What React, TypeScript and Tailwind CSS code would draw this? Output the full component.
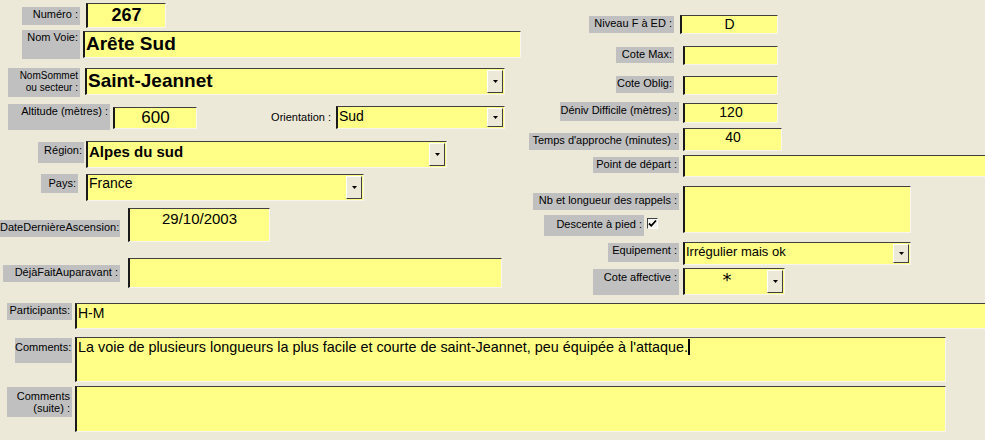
import type { ReactNode } from "react";

const Label = ({ className, children }: { className: string; children: ReactNode }) => (
    <div className={`bg-[#c0c0c0] text-right text-[11px] leading-[13px] pr-[2px] pt-[1px] text-black shrink-0 ${className}`}>
        {children}
    </div>
);

const Arrow = () => (
    <svg width="5" height="3" viewBox="0 0 5 3">
        <path d="M0 0h5L2.5 3z" fill="#000" />
    </svg>
);

const Field = ({
    className,
    text = "",
    children,
    dropdown,
}: {
    className: string;
    text?: string;
    children?: ReactNode;
    dropdown?: boolean;
}) => (
    <div
        className={`flex shrink-0 bg-[#ffff88] border-t border-l-2 border-r border-b border-t-[#404040] border-l-[#1a1a1a] border-r-[#f6f5ee] border-b-[#f6f5ee] overflow-hidden ${className}`}
    >
        <div className={`flex-1 min-w-0 whitespace-nowrap ${text}`}>{children}</div>
        {dropdown && (
            <div className="w-[16px] shrink-0 self-stretch my-[1px] mr-[1px] bg-[#ece9d8] border border-t-white border-l-white border-r-[#404040] border-b-[#404040] flex items-center justify-center">
                <Arrow />
            </div>
        )}
    </div>
);

export default function App() {
    return (
        <div className="w-[985px] h-[440px] bg-[#ece9d8] overflow-hidden font-['Liberation_Sans',Arial,sans-serif] text-black">
            <div className="flex h-[300px]">
                {/* colonne gauche */}
                <div className="w-[520px] shrink-0 flex flex-col">
                    <div className="flex items-start mt-[3px]">
                        <Label className="ml-[22px] mt-[4px] w-[58px] h-[18px]">Numéro :</Label>
                        <Field className="ml-[6px] w-[80px] h-[25px]" text="text-center font-bold text-[18px] leading-[23px]">
                            267
                        </Field>
                    </div>
                    <div className="flex items-start mt-[2px]">
                        <Label className="ml-[22px] w-[58px] h-[29px]">Nom Voie:</Label>
                        <Field className="ml-[3px] mt-[1px] w-[438px] h-[27px]" text="pl-[1px] font-bold text-[19px] leading-[24px]">
                            Arête Sud
                        </Field>
                    </div>
                    <div className="flex items-start mt-[9px]">
                        <Label className="ml-[8px] w-[72px] h-[29px] !text-[10px] !leading-[12px] pt-[2px]">
                            NomSommet
                            <br />
                            ou secteur :
                        </Label>
                        <Field className="ml-[5px] w-[420px] h-[27px]" text="pl-[1px] font-bold text-[19px] leading-[24px]" dropdown>
                            Saint-Jeannet
                        </Field>
                    </div>
                    <div className="flex items-start mt-[7px]">
                        <Label className="ml-[8px] w-[102px] h-[26px]">Altitude (mètres) :</Label>
                        <Field className="ml-[3px] mt-[3px] w-[84px] h-[22px]" text="text-center text-[17px] leading-[19px]">
                            600
                        </Field>
                        <div className="w-[136px] mt-[7px] text-right text-[11px] leading-[13px] pr-[2px]">Orientation :</div>
                        <Field className="ml-[3px] mt-[2px] w-[169px] h-[23px]" text="pl-[1px] text-[14px] leading-[18px]" dropdown>
                            Sud
                        </Field>
                    </div>
                    <div className="flex items-start mt-[11px]">
                        <Label className="ml-[38px] mt-[1px] w-[46px] h-[21px] pt-[2px]">Région:</Label>
                        <Field className="ml-[2px] w-[361px] h-[27px]" text="pl-[1px] font-bold text-[15px] leading-[19px]" dropdown>
                            Alpes du sud
                        </Field>
                    </div>
                    <div className="flex items-start mt-[6px]">
                        <Label className="ml-[41px] w-[37px] h-[19px] pt-[3px]">Pays:</Label>
                        <Field className="ml-[8px] w-[278px] h-[27px]" text="pl-[1px] text-[14px] leading-[17px]" dropdown>
                            France
                        </Field>
                    </div>
                    <div className="flex items-start mt-[7px]">
                        <Label className="mt-[12px] w-[120px] h-[17px]">DateDernièreAscension:</Label>
                        <Field className="ml-[8px] w-[142px] h-[34px]" text="text-center text-[15px] leading-[18px] pt-[1px]">
                            29/10/2003
                        </Field>
                    </div>
                    <div className="flex items-start mt-[16px]">
                        <Label className="ml-[3px] mt-[7px] w-[117px] h-[17px]">DéjàFaitAuparavant :</Label>
                        <Field className="ml-[8px] w-[374px] h-[30px]" />
                    </div>
                </div>

                {/* colonne droite */}
                <div className="flex-1 flex flex-col">
                    <div className="flex items-start mt-[15px]">
                        <Label className="ml-[69px] mt-[1px] w-[85px] h-[17px]">Niveau F à ED :</Label>
                        <Field className="ml-[6px] w-[98px] h-[19px]" text="text-center text-[14px] leading-[16px]">
                            D
                        </Field>
                    </div>
                    <div className="flex items-start mt-[12px]">
                        <Label className="ml-[96px] mt-[1px] w-[58px] h-[16px]">Cote Max:</Label>
                        <Field className="ml-[9px] w-[95px] h-[19px]" />
                    </div>
                    <div className="flex items-start mt-[11px]">
                        <Label className="ml-[96px] w-[58px] h-[17px]">Cote Oblig:</Label>
                        <Field className="ml-[9px] w-[95px] h-[19px]" />
                    </div>
                    <div className="flex items-start mt-[7px]">
                        <Label className="ml-[40px] w-[119px] h-[19px] pt-[2px]">Déniv Difficile (mètres) :</Label>
                        <Field className="ml-[4px] mt-[1px] w-[95px] h-[20px]" text="text-center text-[14px] leading-[17px]">
                            120
                        </Field>
                    </div>
                    <div className="flex items-start mt-[5px]">
                        <Label className="ml-[9px] mt-[5px] w-[150px] h-[17px]">Temps d'approche (minutes) :</Label>
                        <Field className="ml-[4px] w-[99px] h-[23px]" text="text-center text-[14px] leading-[17px]">
                            40
                        </Field>
                    </div>
                    <div className="flex items-start mt-[4px]">
                        <Label className="ml-[73px] mt-[2px] w-[86px] h-[16px]">Point de départ :</Label>
                        <Field className="ml-[4px] w-[310px] h-[22px]" />
                    </div>
                    <div className="flex items-start mt-[9px]">
                        <div className="w-[163px] shrink-0 flex flex-col">
                            <Label className="ml-[13px] mt-[7px] w-[146px] h-[17px]">Nb et longueur des rappels :</Label>
                            <div className="flex items-start">
                                <Label className="ml-[24px] mt-[5px] w-[100px] h-[21px] pt-[3px]">Descente à pied :</Label>
                                <div className="ml-[3px] mt-[8px] w-[11px] h-[11px] bg-[#f4f4f0] border border-t-[#404040] border-l-[#404040] border-r-white border-b-white flex items-center justify-center">
                                    <svg width="9" height="9" viewBox="0 0 9 9">
                                        <path d="M1 4.5l2.3 2.3L8 1.5" stroke="#000" strokeWidth="1.8" fill="none" />
                                    </svg>
                                </div>
                            </div>
                        </div>
                        <Field className="w-[228px] h-[47px]" />
                    </div>
                    <div className="flex items-start mt-[6px]">
                        <Label className="ml-[88px] mt-[1px] w-[71px] h-[19px]">Equipement :</Label>
                        <Field className="ml-[4px] w-[228px] h-[23px]" text="pl-[1px] text-[13px] leading-[18px]" dropdown>
                            Irrégulier mais ok
                        </Field>
                    </div>
                    <div className="flex items-start mt-[3px]">
                        <Label className="ml-[73px] mt-[1px] w-[86px] h-[26px] pt-[2px]">Cote affective :</Label>
                        <Field className="ml-[4px] w-[102px] h-[27px]" text="text-center font-['DejaVu_Sans',sans-serif] text-[18px] leading-[22px] pl-[2px]" dropdown>
                            *
                        </Field>
                    </div>
                </div>
            </div>

            <div className="flex items-start mt-[3px]">
                <Label className="ml-[7px] w-[65px] h-[17px]">Participants:</Label>
                <Field className="ml-[3px] w-[920px] h-[26px]" text="pl-[1px] text-[14px] leading-[17px] pt-[1px]">
                    H-M
                </Field>
            </div>
            <div className="flex items-start mt-[8px]">
                <Label className="ml-[15px] mt-[1px] w-[57px] h-[25px] pt-[3px]">Comments:</Label>
                <Field className="ml-[3px] w-[871px] h-[45px]" text="pl-[1px] text-[14.4px] leading-[17px] pt-[1px]">
                    La voie de plusieurs longueurs la plus facile et courte de saint-Jeannet, peu équipée à l'attaque.
                    <span className="inline-block w-[2px] h-[16px] bg-black align-top" />
                </Field>
            </div>
            <div className="flex items-start mt-[4px]">
                <Label className="ml-[7px] mt-[1px] w-[65px] h-[30px] pt-[3px] !leading-[12px]">
                    Comments
                    <br />
                    (suite) :
                </Label>
                <Field className="ml-[3px] w-[871px] h-[46px]" />
            </div>
        </div>
    );
}
